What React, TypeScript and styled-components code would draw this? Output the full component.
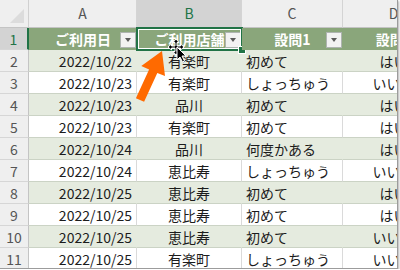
import React from 'react';
import styled, { createGlobalStyle, css } from 'styled-components';

const GlobalStyle = createGlobalStyle`
    body {
        margin: 0;
        background: #ffffff;
        font-family: "Noto Sans CJK JP", "Noto Sans", sans-serif;
    }
`;

const GREEN = '#217346';

const columns = ['A', 'B', 'C', 'D'];
const headers = ['ご利用日', 'ご利用店舗', '設問1', '設問2'];

const rows: string[][] = [
    ['2022/10/22', '有楽町', '初めて', 'はい'],
    ['2022/10/23', '有楽町', 'しょっちゅう', 'いいえ'],
    ['2022/10/23', '品川', '初めて', 'はい'],
    ['2022/10/23', '有楽町', '初めて', 'はい'],
    ['2022/10/24', '品川', '何度かある', 'はい'],
    ['2022/10/24', '恵比寿', 'しょっちゅう', 'いいえ'],
    ['2022/10/25', '恵比寿', '初めて', 'はい'],
    ['2022/10/25', '恵比寿', '初めて', 'はい'],
    ['2022/10/25', '恵比寿', '初めて', 'いいえ'],
    ['2022/10/25', '有楽町', 'しょっちゅう', 'いいえ'],
];

const aligns: Array<'left' | 'center' | 'right'> = ['right', 'center', 'left', 'center'];

const Sheet = () => {
    return (
        <Frame>
            <Grid>
                <Corner />
                {columns.map(c => (
                    <ColHead key={c} $selected={c === 'B'}>{c}</ColHead>
                ))}

                <RowHead $selected>1</RowHead>
                {headers.map((h, i) => (
                    <HeadCell key={h}>
                        {h}
                        {i < 3 && <FilterButton />}
                        {i === 1 && <Selection><FillHandle /></Selection>}
                    </HeadCell>
                ))}

                {rows.map((r, ri) => (
                    <React.Fragment key={ri}>
                        <RowHead>{ri + 2}</RowHead>
                        {r.map((v, ci) => (
                            <Cell key={ci} $align={aligns[ci]} $band={ri % 2 === 0}>{v}</Cell>
                        ))}
                    </React.Fragment>
                ))}
            </Grid>

            <Pointer width="400" height="270" viewBox="0 0 400 270">
                <polygon
                    points="162,51 165,76 157.3,73 144.1,101.8 135.9,98.2 149.1,69.4 141.3,66"
                    fill="#ff6a00"
                />
                <g stroke="#fff" strokeWidth="1" strokeLinejoin="round" fill="#000">
                    <path d="M176 39 l3 3.5 h-2 v3.5 h3.5 v-2 l3.5 3 -3.5 3 v-2 h-3.5 v3.5 h2 l-3 3.5 -3 -3.5 h2 v-3.5 h-3.5 v2 l-3.5 -3 3.5 -3 v2 h3.5 v-3.5 h-2 z" />
                    <path d="M177 47 v13 l3 -3 2.5 5 2 -1 -2.5 -5 h4 z" />
                </g>
            </Pointer>
        </Frame>
    );
};

const App = () => (
    <>
        <GlobalStyle />
        <Sheet />
    </>
);

const Frame = styled.div`
    position: relative;
    width: 397px;
    height: 268px;
    overflow: hidden;
    border-right: 1px solid #9c9c9c;
    border-bottom: 1px solid #9c9c9c;
    box-shadow: 1px 1px 2px rgba(0, 0, 0, 0.3);
`;

const Grid = styled.div`
    display: grid;
    grid-template-columns: 29px 108px 105px 101px 102px;
    grid-template-rows: 28px;
    grid-auto-rows: 22px;
    font-size: 14px;
    color: #1c1c1c;
    & > * {
        box-sizing: border-box;
    }
`;

const Corner = styled.div`
    position: relative;
    background: #efefef;
    border-right: 1px solid #d0d0d0;
    border-bottom: 1px solid #c4c4c4;
    &::after {
        content: '';
        position: absolute;
        right: 4px;
        bottom: 4px;
        border-style: solid;
        border-width: 0 0 14px 14px;
        border-color: transparent transparent #dcdcdc transparent;
    }
`;

const ColHead = styled.div<{ $selected?: boolean }>`
    display: flex;
    align-items: center;
    justify-content: center;
    padding-bottom: 2px;
    background: ${p => (p.$selected ? '#d3d3d3' : '#efefef')};
    color: ${p => (p.$selected ? GREEN : '#555')};
    border-right: 1px solid #d4d4d4;
    border-bottom: 1px solid #c4c4c4;
`;

const RowHead = styled.div<{ $selected?: boolean }>`
    display: flex;
    align-items: center;
    justify-content: center;
    background: ${p => (p.$selected ? '#d3d3d3' : '#efefef')};
    color: ${p => (p.$selected ? GREEN : '#555')};
    border-bottom: 1px solid #d6d6d6;
    ${p =>
        p.$selected
            ? css`border-right: 2px solid ${GREEN};`
            : css`border-right: 1px solid #c4c4c4;`}
`;

const HeadCell = styled.div`
    position: relative;
    display: flex;
    align-items: center;
    justify-content: center;
    background: #8aa67b;
    color: #ffffff;
    font-weight: bold;
    white-space: nowrap;
    overflow: visible;
`;

const FilterButton = styled.span`
    position: absolute;
    right: 1px;
    top: 4px;
    width: 16px;
    height: 16px;
    box-sizing: border-box;
    background: #f2f2f2;
    border: 1px solid #aeb4b0;
    &::after {
        content: '';
        position: absolute;
        left: 3.5px;
        top: 5px;
        border-style: solid;
        border-width: 4px 3.5px 0 3.5px;
        border-color: #5a5a5a transparent transparent transparent;
    }
`;

const Selection = styled.span`
    position: absolute;
    left: -1px;
    top: -1px;
    right: -1px;
    bottom: -1px;
    border: 2px solid ${GREEN};
    box-shadow: inset 0 0 0 1px #ffffff;
    pointer-events: none;
`;

const FillHandle = styled.span`
    position: absolute;
    right: -5px;
    bottom: -5px;
    width: 6px;
    height: 6px;
    background: ${GREEN};
    border: 1px solid #ffffff;
`;

const Cell = styled.div<{ $align: 'left' | 'center' | 'right'; $band: boolean }>`
    display: flex;
    align-items: center;
    justify-content: ${p =>
        p.$align === 'left' ? 'flex-start' : p.$align === 'right' ? 'flex-end' : 'center'};
    padding: 0 4px 0 4px;
    white-space: nowrap;
    background: ${p => (p.$band ? '#e5ebdf' : '#ffffff')};
    border-bottom: 1px solid #cbd3c5;
    border-right: 1px solid ${p => (p.$band ? '#e5ebdf' : '#dadada')};
`;

const Pointer = styled.svg`
    position: absolute;
    left: 0;
    top: 0;
    pointer-events: none;
`;

export default App;
